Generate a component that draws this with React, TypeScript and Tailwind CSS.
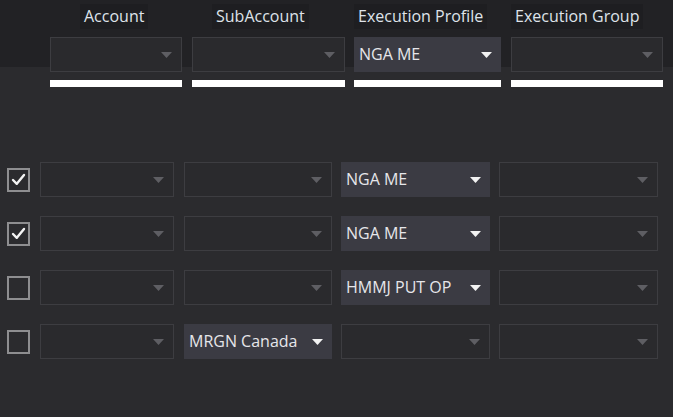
// Execution routing grid — header filters plus per-row account / profile selectors.

type Cell = { value?: string };

type Row = {
  checked: boolean;
  account: Cell;
  subAccount: Cell;
  profile: Cell;
  group: Cell;
};

const rows: Row[] = [
  { checked: true, account: {}, subAccount: {}, profile: { value: "NGA ME" }, group: {} },
  { checked: true, account: {}, subAccount: {}, profile: { value: "NGA ME" }, group: {} },
  { checked: false, account: {}, subAccount: {}, profile: { value: "HMMJ PUT OP" }, group: {} },
  { checked: false, account: {}, subAccount: { value: "MRGN Canada" }, profile: {}, group: {} },
];

const font = { fontFamily: '"Open Sans", "Noto Sans", sans-serif' };

/** Small down-pointing triangle used by every dropdown. */
function Caret({ active }: { active: boolean }) {
  return (
    <svg width="11" height="6" viewBox="0 0 11 6" aria-hidden className="shrink-0">
      <path d="M0 0 H11 L5.5 6 Z" fill={active ? "#f2f2f2" : "#5e5e63"} />
    </svg>
  );
}

/** A combo box: outlined when empty, filled slate when it holds a value. */
function Dropdown({ value, width }: { value?: string; width: string }) {
  const filled = Boolean(value);
  return (
    <div
      className={`flex h-[35px] items-center justify-between gap-1 pl-[5px] pr-[9px] ${width} ${
        filled ? "bg-[#3b3b43]" : "border border-[#3d3d41] bg-[#2a2a2d]"
      }`}
    >
      <span className="mb-[2px] whitespace-nowrap text-[16px] leading-[22px] text-[#e6e6ea]">
        {value ?? ""}
      </span>
      <Caret active={filled} />
    </div>
  );
}

function Checkbox({ checked }: { checked: boolean }) {
  return (
    <span className="flex h-[24px] w-[23px] shrink-0 items-center justify-center border-2 border-[#8e8e90] bg-[#2b2b2e]">
      {checked && (
        <svg width="15" height="13" viewBox="0 0 15 13" aria-hidden>
          <path
            d="M2 7 L5.8 10.8 L13 2"
            fill="none"
            stroke="#f4f4f4"
            strokeWidth="2.4"
            strokeLinecap="round"
            strokeLinejoin="round"
          />
        </svg>
      )}
    </span>
  );
}

/** Header column: label chip above a filter dropdown and its white underline. */
function HeaderColumn({
  label,
  labelOffset,
  width,
  value,
}: {
  label: string;
  labelOffset: string;
  width: string;
  value?: string;
}) {
  return (
    <div className="flex flex-col">
      <div className={`flex h-[37px] items-start ${labelOffset}`}>
        <span className="mt-[4px] whitespace-nowrap bg-[#1e1e21] px-[4px] py-[1px] text-[16px] leading-[23px] text-[#dfe3ea]">
          {label}
        </span>
      </div>
      <Dropdown value={value} width={width} />
      <span className={`mt-[8px] block h-[7px] bg-white ${width}`} />
    </div>
  );
}

export default function App() {
  return (
    <div className="relative h-[417px] w-[673px] overflow-hidden bg-[#2b2b2e]" style={font}>
      {/* darker header band behind the column labels */}
      <div className="absolute inset-x-0 top-0 h-[67px] bg-[#222225]" />

      <div className="relative flex pl-[50px]">
        <div className="flex gap-[10px]">
          <HeaderColumn label="Account" labelOffset="pl-[30px]" width="w-[132px]" />
          <HeaderColumn label="SubAccount" labelOffset="pl-[20px]" width="w-[153px]" />
          <div className="ml-[-1px]">
            <HeaderColumn
              label="Execution Profile"
              labelOffset="pl-0"
              width="w-[147px]"
              value="NGA ME"
            />
          </div>
          <HeaderColumn label="Execution Group" labelOffset="pl-0" width="w-[152px]" />
        </div>
      </div>

      <ol className="relative mt-[75px] flex flex-col gap-[19px] pl-[7px]">
        {rows.map((row, i) => (
          <li key={i} className="flex items-center">
            <Checkbox checked={row.checked} />
            <div className="ml-[10px] flex gap-[10px]">
              <Dropdown value={row.account.value} width="w-[134px]" />
              <Dropdown value={row.subAccount.value} width="w-[148px]" />
            </div>
            <div className="ml-[9px] flex gap-[9px]">
              <Dropdown value={row.profile.value} width="w-[149px]" />
              <Dropdown value={row.group.value} width="w-[159px]" />
            </div>
          </li>
        ))}
      </ol>
    </div>
  );
}
